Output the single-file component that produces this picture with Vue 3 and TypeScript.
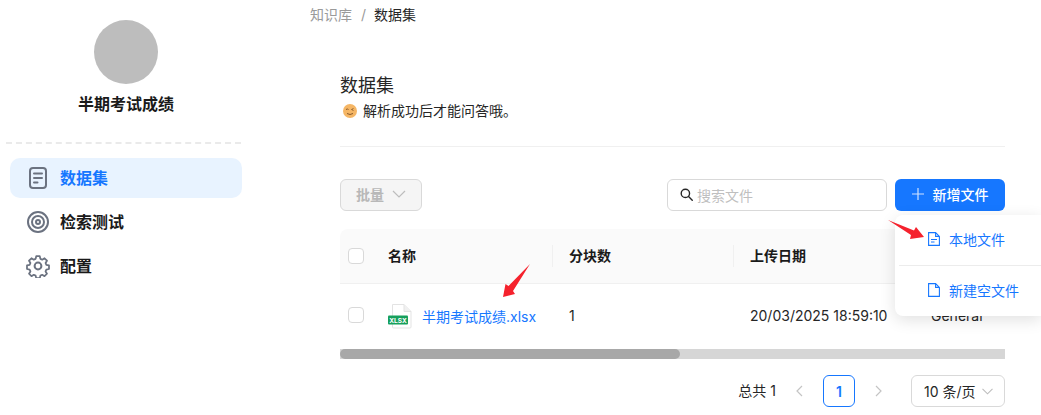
<script setup lang="ts">
const nav = [
  { label: '数据集', icon: 'doc', active: true },
  { label: '检索测试', icon: 'target', active: false },
  { label: '配置', icon: 'gear', active: false },
]
</script>

<template>
  <div class="page">
    <aside class="side">
      <div class="profile">
        <div class="avatar"></div>
        <div class="kb">半期考试成绩</div>
      </div>
      <div class="dash"></div>
      <nav class="nav">
        <div v-for="n in nav" :key="n.label" class="nav-item" :class="{ on: n.active }">
          <svg v-if="n.icon === 'doc'" width="22" height="22" viewBox="0 0 22 22" fill="none" stroke="#6b7280" stroke-width="2" stroke-linecap="round">
            <rect x="3" y="1" width="16" height="20" rx="3" />
            <path d="M7 6.500h8M7 11h8M7 15.500h3.500" />
          </svg>
          <svg v-else-if="n.icon === 'target'" width="24" height="24" viewBox="0 0 24 24" fill="none" stroke="#6b7280" stroke-width="2">
            <circle cx="12" cy="12" r="10" />
            <circle cx="12" cy="12" r="6" />
            <circle cx="12" cy="12" r="2" />
          </svg>
          <svg v-else width="24" height="24" viewBox="0 0 24 24" fill="none" stroke="#6b7280" stroke-width="2" stroke-linejoin="round">
            <path d="M10 2h4l.7 3 2.100.9 2.600-1.600 2.800 2.800-1.600 2.600.9 2.100 3 .7v4l-3 .7-.9 2.100 1.600 2.600-2.800 2.800-2.600-1.600-2.100.9-.7 3h-4l-.7-3-2.100-.9-2.600 1.600-2.800-2.800 1.600-2.600-.9-2.100-3-.7v-4l3-.7.9-2.100-1.600-2.600 2.800-2.800 2.600 1.600 2.100-.9z" transform="translate(1.440 .48) scale(.88)" />
            <circle cx="12" cy="12" r="3.400" />
          </svg>
          <span>{{ n.label }}</span>
        </div>
      </nav>
    </aside>

    <main class="main">
      <div class="crumbs"><span class="c1">知识库</span><span class="sep">/</span><span>数据集</span></div>
      <section class="content">
        <h1>数据集</h1>
        <div class="tip">
          <svg class="emoji" width="14" height="14" viewBox="0 0 14 14">
            <circle cx="7" cy="7" r="7" fill="#f5b665" />
            <path d="M3 5.500q1.500-1 2.500 0" fill="none" stroke="#8a5a2b" stroke-width="1" />
            <path d="M8.500 5.500l2-1M8.500 5.500l2 1" fill="none" stroke="#8a5a2b" stroke-width=".9" />
            <path d="M4 9.500q3 2 6 0" fill="none" stroke="#8a5a2b" stroke-width="1" />
          </svg>
          <span>解析成功后才能问答哦。</span>
        </div>
        <div class="rule"></div>

        <div class="toolbar">
          <button class="batch">批量
            <svg width="14" height="8" viewBox="0 0 14 8" fill="none" stroke="#bdbdbd" stroke-width="1.200"><path d="M1 1l6 6 6-6" /></svg>
          </button>
          <div class="right">
            <div class="search">
              <svg width="13" height="13" viewBox="0 0 14 14" fill="none" stroke="#262626" stroke-width="1.500"><circle cx="5.800" cy="5.800" r="4.500" /><path d="M9.200 9.200l4 4" stroke-linecap="round" /></svg>
              <span>搜索文件</span>
            </div>
            <button class="add">
              <svg width="12" height="12" viewBox="0 0 12 12" stroke="#cfe2ff" stroke-width="1.200"><path d="M6 0v12M0 6h12" /></svg>
              新增文件
            </button>
          </div>
        </div>

        <div class="table-wrap">
          <div class="table">
            <div class="row head">
              <div class="cell ck"><i class="box"></i></div>
              <div class="cell sepd">名称</div>
              <div class="cell sepd">分块数</div>
              <div class="cell sepd">上传日期</div>
              <div class="cell">解析方法</div>
            </div>
            <div class="row body">
              <div class="cell ck"><i class="box"></i></div>
              <div class="cell file">
                <svg width="24" height="26" viewBox="0 0 24 26">
                  <path d="M4.500 1.500h11.500l7 7v15.500a1 1 0 0 1-1 1h-16.500a1 1 0 0 1-1-1z" fill="#fff" stroke="#e3e3e3" />
                  <path d="M16 1.500v7h7" fill="#f0f0f0" stroke="#e3e3e3" />
                  <rect x="0" y="12.500" width="20" height="9" rx="1" fill="#16a05d" />
                  <text x="10" y="19.500" text-anchor="middle" font-size="6.500" font-weight="700" fill="#fff" font-family="Inter, sans-serif">XLSX</text>
                </svg>
                <span class="link">半期考试成绩.xlsx</span>
              </div>
              <div class="cell">1</div>
              <div class="cell">20/03/2025 18:59:10</div>
              <div class="cell">General</div>
            </div>
          </div>
          <div class="track"><div class="thumb"></div></div>
        </div>

        <div class="pager">
          <span class="total">总共 1</span>
          <svg class="arrow prev" width="8" height="12" viewBox="0 0 8 12" fill="none" stroke="#c4c4c4" stroke-width="1.200"><path d="M7 1L2 6l5 5" /></svg>
          <span class="pg">1</span>
          <svg class="arrow next" width="8" height="12" viewBox="0 0 8 12" fill="none" stroke="#c4c4c4" stroke-width="1.200"><path d="M1 1l5 5-5 5" /></svg>
          <div class="size">10 条/页
            <svg width="11" height="7" viewBox="0 0 11 7" fill="none" stroke="#bdbdbd" stroke-width="1.100"><path d="M.5.800l5 5 5-5" /></svg>
          </div>
        </div>
      </section>
    </main>

    <div class="menu">
      <div class="mi">
        <svg width="12" height="14" viewBox="0 0 12 14" fill="none" stroke="#1677ff" stroke-width="1.100"><path d="M.6.600h7l3.800 3.800v9H.6zM7.600.6v3.800h3.800" /><path d="M3 7.500h6M3 10h3.500" /></svg>
        本地文件
      </div>
      <div class="mi-line"></div>
      <div class="mi second">
        <svg width="12" height="14" viewBox="0 0 12 14" fill="none" stroke="#1677ff" stroke-width="1.100"><path d="M.6.600h7l3.800 3.800v9H.6zM7.600.6v3.800h3.800" /></svg>
        新建空文件
      </div>
    </div>

    <svg class="mark m1" width="38" height="30" viewBox="0 0 38 30"><path d="M0 1L26 11.500 28 8 36 18 22 20 23 16z" fill="#f5222d" /></svg>
    <svg class="mark m2" width="30" height="38" viewBox="0 0 30 38"><path d="M28 1L6.500 23 3.500 21 1 34 13 31 11 28z" fill="#f5222d" /></svg>
  </div>
</template>

<style>
html, body { margin: 0; background: #fff; overflow: hidden; }
</style>

<style scoped>
.page {
  position: relative; width: 1041px; height: 415px; overflow: hidden; display: flex;
  font-family: Inter, "Noto Sans CJK SC", sans-serif; font-size: 14px; color: #262626; background: #fff;
}
.side { width: 252px; flex: none; padding: 20px 10px 0; box-sizing: border-box; }
.profile { display: flex; flex-direction: column; align-items: center; }
.avatar { width: 64px; height: 64px; border-radius: 50%; background: #bdbdbd; }
.kb { margin-top: 9px; font-size: 16px; font-weight: 700; line-height: 22px; color: #1a1a1a; }
.dash { margin: 27px 0 14px -4px; width: 235px; border-top: 2px dashed #eaeaea; }
.nav { display: flex; flex-direction: column; gap: 4px; width: 232px; }
.nav-item { display: flex; align-items: center; gap: 10px; height: 40px; padding-left: 16px; border-radius: 10px; font-size: 16px; font-weight: 700; color: #1a1a1a; }
.nav-item span { padding-bottom: 2px; }
.nav-item.on { background: #e8f3ff; color: #1677ff; padding-left: 17px; gap: 11px; }
.main { width: 789px; flex: none; box-sizing: border-box; padding-left: 58px; }
.crumbs { margin-top: 6px; line-height: 18px; font-size: 14px; display: flex; gap: 8px; color: #262626; }
.crumbs .c1, .crumbs .sep { color: #9a9a9a; }
.crumbs .sep { margin-left: 1px; }
.content { width: 665px; padding-left: 30px; }
h1 { margin: 50px 0 0; font-size: 18px; font-weight: 400; line-height: 24px; color: #262626; }
.tip { display: flex; align-items: center; gap: 6px; margin-top: 3px; padding-left: 3px; font-size: 14px; line-height: 20px; }
.rule { margin-top: 25px; border-top: 1px solid #f0f0f0; }
.toolbar { display: flex; justify-content: space-between; margin-top: 32px; height: 32px; }
.batch { width: 82px; height: 32px; box-sizing: border-box; border: 1px solid #d9d9d9; background: #f5f5f5; border-radius: 6px; color: #b8b8b8; font: 700 14px Inter, "Noto Sans CJK SC", sans-serif; display: flex; align-items: center; justify-content: center; gap: 8px; padding: 0 0 2px; }
.right { display: flex; gap: 8px; }
.search { width: 220px; height: 32px; box-sizing: border-box; border: 1px solid #d9d9d9; border-radius: 6px; display: flex; align-items: center; gap: 4px; padding: 0 0 1px 12px; color: #bfbfbf; }
.add { width: 110px; height: 32px; border: 0; background: #1677ff; color: #fff; border-radius: 6px; font: 500 14px Inter, "Noto Sans CJK SC", sans-serif; display: flex; align-items: center; justify-content: center; gap: 9px; padding: 0 0 2px; }
.table-wrap { margin-top: 18px; width: 665px; overflow: hidden; }
.table { width: 980px; }
.row { display: grid; grid-template-columns: 32px 181px 181px 181px 405px; }
.head { height: 54px; background: #fafafa; border-bottom: 1px solid #f0f0f0; border-radius: 8px 8px 0 0; font-weight: 700; color: #1a1a1a; font-size: 14px; }
.head .cell { padding-bottom: 2px; }
.body { height: 61px; }
.body .cell { padding-top: 2px; }
.cell { display: flex; align-items: center; padding-left: 16px; position: relative; }
.head .sepd::after { content: ""; position: absolute; right: 0; top: 16px; height: 22px; border-right: 1px solid #f0f0f0; }
.cell.ck { padding-left: 8px; padding-top: 0; padding-bottom: 0; }
.box { display: block; box-sizing: border-box; width: 16px; height: 16px; border: 1px solid #d9d9d9; border-radius: 4px; background: #fff; }
.file { gap: 10px; }
.file svg { margin-top: 0; }
.link { color: #1677ff; }
.track { margin-top: 4px; height: 10px; background: #d6d6d6; }
.thumb { width: 340px; height: 10px; background: #a8a8a8; border-radius: 5px; }
.pager { display: flex; justify-content: flex-end; align-items: center; margin-top: 16px; height: 32px; font-size: 14px; }
.total { padding-bottom: 2px; }
.prev { margin: 0 20px 0 19px; }
.next { margin: 0 28px 0 20px; }
.pg { width: 32px; height: 32px; box-sizing: border-box; border: 1px solid #1677ff; border-radius: 6px; color: #1677ff; font-weight: 600; display: flex; align-items: center; justify-content: center; font-size: 14px; }
.size { width: 94px; height: 32px; box-sizing: border-box; border: 1px solid #d9d9d9; border-radius: 6px; display: flex; align-items: center; justify-content: space-between; padding: 0 11px 0 12px; font-size: 14px; }
.menu { position: absolute; left: 895px; top: 215px; width: 146px; height: 101px; background: #fff; border-radius: 8px 0 0 8px; box-shadow: 0 4px 16px rgba(0,0,0,.12); font-size: 14px; color: #1677ff; }
.mi { display: flex; align-items: center; gap: 9px; height: 50px; box-sizing: border-box; padding: 0 0 2px 33px; }
.mi-line { margin-left: 4px; border-top: 1px solid #ececec; }
.mark { position: absolute; }
.m1 { left: 888px; top: 219px; }
.m2 { left: 502px; top: 263px; }
</style>
